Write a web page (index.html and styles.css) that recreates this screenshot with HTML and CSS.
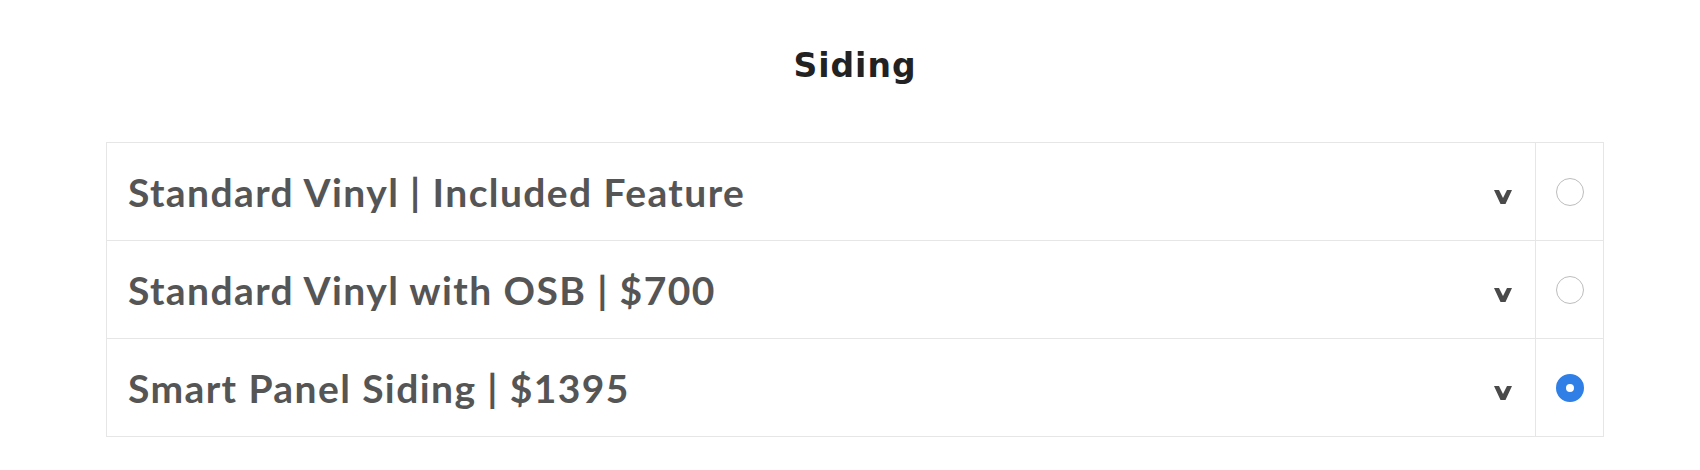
FILE: index.html
```html
<!DOCTYPE html>
<html lang="en">
<head>
    <meta charset="UTF-8">
    <title>Siding</title>
    <link rel="stylesheet" href="styles.css">
</head>
<body>
    <div class="section">
        <h2 class="section-title">Siding</h2>

        <div class="options">
            <div class="option">
                <div class="option-label">
                    <span class="option-name">Standard Vinyl | Included Feature</span>
                    <svg class="chevron" viewBox="0 0 18 14"><polygon points="0,0 5,0 9,8 13,0 18,0 11.5,14 6.5,14"/></svg>
                </div>
                <div class="option-pick"><span class="radio"></span></div>
            </div>
            <div class="option">
                <div class="option-label">
                    <span class="option-name">Standard Vinyl with OSB | $700</span>
                    <svg class="chevron" viewBox="0 0 18 14"><polygon points="0,0 5,0 9,8 13,0 18,0 11.5,14 6.5,14"/></svg>
                </div>
                <div class="option-pick"><span class="radio"></span></div>
            </div>
            <div class="option">
                <div class="option-label">
                    <span class="option-name">Smart Panel Siding | $1395</span>
                    <svg class="chevron" viewBox="0 0 18 14"><polygon points="0,0 5,0 9,8 13,0 18,0 11.5,14 6.5,14"/></svg>
                </div>
                <div class="option-pick"><span class="radio checked"></span></div>
            </div>
        </div>
    </div>
</body>
</html>
```

FILE: styles.css
```css
/* General */
body {
    margin: 0;
    padding: 0;
    background: #fff;
    font-family: 'Lato', 'Open Sans', sans-serif;
}
.section {
    padding: 46px 96px 0 106px;
}
.section-title {
    margin: 0 0 56px;
    text-align: center;
    font-family: 'DejaVu Sans', 'Open Sans', sans-serif;
    font-weight: 700;
    font-size: 33px;
    line-height: 40px;
    letter-spacing: 1px;
    color: #222;
}

/* Option rows */
.options {
    border: 1px solid #e6e6e6;
}
.option {
    display: flex;
    height: 97px;
    border-top: 1px solid #e6e6e6;
}
.option:first-child {
    border-top: none;
}
.option-label {
    flex: 1;
    display: flex;
    align-items: center;
    justify-content: space-between;
    padding: 0 23px 0 21px;
}
.option-name {
    font-size: 39px;
    font-weight: 700;
    letter-spacing: 1.4px;
    color: #555;
}
.chevron {
    width: 18px;
    height: 14px;
    margin-top: 10px;
    fill: #4a4a4a;
}
.option-pick {
    width: 67px;
    border-left: 1px solid #e6e6e6;
    display: flex;
    align-items: center;
    justify-content: center;
}
.radio {
    width: 28px;
    height: 28px;
    border: 1px solid #bdbdbd;
    border-radius: 50%;
    box-sizing: border-box;
}
.radio.checked {
    border: 10px solid #2f7fe6;
    background: #fff;
}
```
